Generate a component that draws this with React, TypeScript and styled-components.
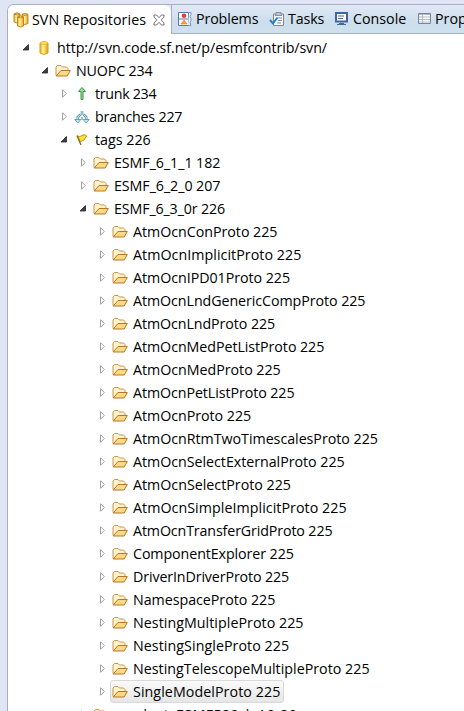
import React from 'react';
import styled, { createGlobalStyle } from 'styled-components';

const Global = createGlobalStyle`
  *{box-sizing:border-box}
  html,body{margin:0;padding:0;overflow:hidden;background:#dfe5f5}
  body{font:14.25px "Open Sans","Noto Sans",sans-serif;color:#000}
  svg{display:block;flex:none}
`;

const Page = styled.div`
  width: 464px;
  height: 711px;
  padding: 4px 0 0 7px;
  background: #dfe5f5;
  overflow: hidden;
`;
const View = styled.section`
  height: 707px;
  display: flex;
  flex-direction: column;
  background: #fff;
  border: 1px solid #a9aec0;
  border-width: 1px 0 0 1px;
  border-top-left-radius: 7px;
  overflow: hidden;
`;
const TabBar = styled.div`
  display: flex;
  height: 29px;
  flex: none;
  background: linear-gradient(#e2e9f6, #cddeed 55%, #cfe0ee);
`;
const ActiveTab = styled.div`
  display: flex;
  align-items: center;
  width: 163px;
  height: 29px;
  padding: 0 0 0 5px;
  background: #fff;
  border-top-right-radius: 7px;
`;
const InactiveTabs = styled.div`
  flex: 1;
  display: flex;
  align-items: center;
  overflow: hidden;
  border-left: 1px solid #a9aec0;
  border-bottom: 1px solid #a9aec0;
`;
const Tab = styled.div<{ $w: number }>`
  display: flex;
  align-items: center;
  flex: none;
  width: ${p => p.$w}px;
  padding-left: 5px;
`;
const Label = styled.span<{ $gap?: number; $ls?: number }>`
  margin-left: ${p => p.$gap ?? 0}px;
  letter-spacing: ${p => p.$ls ?? 0}px;
  line-height: 22px;
  white-space: pre;
`;
const CloseSlot = styled.span`
  margin-left: auto;
  margin-right: 6px;
`;
const Tree = styled.div`
  padding-top: 2px;
`;
const Row = styled.div<{ $level: number }>`
  display: flex;
  align-items: center;
  height: 23px;
  padding-left: ${p => 14 + p.$level * 19}px;
`;
const ArrowSlot = styled.span`
  width: 12px;
  flex: none;
`;
const Item = styled.div<{ $selected?: boolean }>`
  display: flex;
  align-items: center;
  height: 23px;
  padding: 0 3px 0 1px;
  border: 1px solid ${p => (p.$selected ? '#d9d9d9' : 'transparent')};
  border-radius: 3px;
  background: ${p => (p.$selected ? 'linear-gradient(#fafafa,#e6e6e6)' : 'none')};
`;

const Arrow = ({ open }: { open: boolean }) => (
  <svg width="9" height="9" viewBox="0 0 9 9">
    {open ? <path d="M6.500 1.500v5.500H1z" fill="#404040" stroke="#262626" strokeWidth=".8" /> : <path d="M2.500 .7v7.600L6.300 4.500z" fill="#fff" stroke="#a0a0a0" />}
  </svg>
);

const Folder = () => (
  <svg width="16" height="16" viewBox="0 0 16 16">
    <path d="M1 12.500V4L2.500 2.500H6L7.500 4h4L13 5.500V8" fill="#fff2cc" stroke="#c9964a" />
    <path d="M1.200 13 6 7.500h9.300L12.200 13z" fill="#fbd984" stroke="#b5772a" strokeLinejoin="round" />
  </svg>
);

const Cylinder = () => (
  <svg width="16" height="16" viewBox="0 0 16 16">
    <defs>
      <linearGradient id="gold">
        <stop offset="0" stopColor="#e9a40c" />
        <stop offset=".38" stopColor="#fff8a0" />
        <stop offset="1" stopColor="#e09a08" />
      </linearGradient>
    </defs>
    <path d="M4 3Q8 0 12 3V13Q8 16 4 13z" fill="url(#gold)" stroke="#dfa01c" />
    <ellipse cx="8" cy="3" rx="3.6" ry="1.4" fill="#ffe36a" stroke="#e2a824" strokeWidth=".7" />
  </svg>
);

const Repositories = () => (
  <svg width="17" height="16" viewBox="0 0 17 16">
    <defs>
      <linearGradient id="drum">
        <stop offset="0" stopColor="#f0b429" />
        <stop offset=".4" stopColor="#fff2a0" />
        <stop offset="1" stopColor="#e8a41a" />
      </linearGradient>
    </defs>
    {[[1, 2, 9], [9, 2.5, 10], [4.5, 5, 10]].map(([x, y, h]) => (
      <g key={x} stroke="#c07f16" strokeWidth=".9" transform={`translate(${x} ${y})`}>
        <path d={`M0 0Q3-2 6 0V${h - 1}Q3 ${h + 1} 0 ${h - 1}z`} fill="url(#drum)" />
        <path d="M0 0Q3-2 6 0Q3 2 0 0" fill="#ffe58a" />
      </g>
    ))}
  </svg>
);

const Trunk = () => (
  <svg width="16" height="16" viewBox="0 0 16 16">
    <path d="M8 1.500 11.500 5.500H9V13.500H7V5.500H4.500z" fill="#a4dc90" stroke="#379a48" strokeLinejoin="round" />
  </svg>
);

const Branches = () => (
  <svg width="16" height="16" viewBox="0 0 16 16">
    <path d="M8 2v4M6.500 5.500 3.800 8v3M9.500 5.500 12.200 8v3" fill="none" stroke="#5c9cab" strokeWidth="2.600" />
    <path d="M8 2v4M6.500 5.500 3.800 8v3M9.500 5.500 12.200 8v3" fill="none" stroke="#d4eef2" strokeWidth=".9" />
    <path d="M.8 10.500h6L3.800 14zM9.200 10.500h6l-3 3.500z" fill="#c6ebf2" stroke="#5c9cab" strokeWidth=".9" strokeLinejoin="round" />
    <path d="M8 8v3" stroke="#5c9cab" strokeWidth="1.200" />
  </svg>
);

const Flag = () => (
  <svg width="16" height="16" viewBox="0 0 16 16">
    <path d="M3 4Q6 5.500 8 3.500T12.500 4L10 8 6.500 9.500z" fill="#ffe13a" stroke="#c4940e" />
    <path d="M3 3.500 7 13" stroke="#8a6414" strokeWidth="1.300" />
  </svg>
);

const Close = () => (
  <svg width="12" height="12" viewBox="0 0 12 12">
    <path d="M1 1h2.500L6 3.700 8.500 1H11v2L8.200 6 11 9v2H8.500L6 8.300 3.500 11H1V9l2.800-3L1 3z" fill="#fff" stroke="#666" strokeWidth=".9" />
  </svg>
);

const Problems = () => (
  <svg width="16" height="16" viewBox="0 0 16 16">
    <path d="M1.500 1.500h10v13h-10zM1.500 8h10" fill="#fff" stroke="#5878a5" />
    <path d="M12 1.500h2v2l-1 2 1 2v2l-1 2 1 3h-3" fill="#eef3fb" stroke="#7d94b8" />
    <circle cx="7" cy="4.700" r="2.300" fill="#e33b40" />
    <path d="m7 9 3 4H4z" fill="#f4a62a" stroke="#d87b20" strokeWidth=".6" />
  </svg>
);

const Tasks = () => (
  <svg width="16" height="16" viewBox="0 0 16 16">
    <path d="M4.500 3h10v11.500h-10z" fill="#f5f8fd" stroke="#a08065" />
    <path d="M7 3V1.500h5V3l1 1.500H6z" fill="#b9c3d6" stroke="#6f7f9b" strokeWidth=".8" />
    <path d="M9 7h4M9 9.500h4M8 12h4" stroke="#7891ba" />
    <path d="m1 9 3 3.500 4.500-6" fill="none" stroke="#1687d4" strokeWidth="2" />
  </svg>
);

const Console = () => (
  <svg width="16" height="16" viewBox="0 0 16 16">
    <path d="M2 2h11v8.500H2z" fill="#fff" stroke="#3d66a3" strokeWidth="2" />
    <path d="M4 5h6M4 7.500h5" stroke="#52658b" />
    <path d="M5 12.500h5M3 13.500h9" stroke="#46689b" />
  </svg>
);

const Properties = () => (
  <svg width="16" height="16" viewBox="0 0 16 16">
    <path d="M1.500 2.500h12v10h-12z" fill="#fff" stroke="#76849c" />
    <path d="M2 3.500h11" stroke="#a8b4c8" />
    <path d="M2 6h11M2 8.500h11M2 11h11M5.500 3v9" stroke="#b0b9c7" />
  </svg>
);

const icons = { folder: Folder, repo: Cylinder, trunk: Trunk, branches: Branches, flag: Flag };

interface Node {
  text: string;
  level: number;
  icon?: keyof typeof icons;
  open?: boolean;
  ls?: number;
  selected?: boolean;
}

const nodes: Node[] = [
  { text: 'http://svn.code.sf.net/p/esmfcontrib/svn/', level: 0, icon: 'repo', open: true, ls: -0.09 },
  { text: 'NUOPC 234', level: 1, open: true, ls: -0.15 },
  { text: 'trunk 234', level: 2, icon: 'trunk', ls: -0.3 },
  { text: 'branches 227', level: 2, icon: 'branches', ls: -0.2 },
  { text: 'tags 226', level: 2, icon: 'flag', open: true },
  { text: 'ESMF_6_1_1 182', level: 3, ls: -0.06 },
  { text: 'ESMF_6_2_0 207', level: 3, ls: -0.06 },
  { text: 'ESMF_6_3_0r 226', level: 3, open: true, ls: -0.13 },
  { text: 'AtmOcnConProto 225', level: 4, ls: -0.03 },
  { text: 'AtmOcnImplicitProto 225', level: 4, ls: 0.05 },
  { text: 'AtmOcnIPD01Proto 225', level: 4, ls: -0.04 },
  { text: 'AtmOcnLndGenericCompProto 225', level: 4, ls: -0.07 },
  { text: 'AtmOcnLndProto 225', level: 4, ls: -0.08 },
  { text: 'AtmOcnMedPetListProto 225', level: 4, ls: -0.06 },
  { text: 'AtmOcnMedProto 225', level: 4, ls: -0.03 },
  { text: 'AtmOcnPetListProto 225', level: 4, ls: -0.08 },
  { text: 'AtmOcnProto 225', level: 4, ls: -0.04 },
  { text: 'AtmOcnRtmTwoTimescalesProto 225', level: 4, ls: -0.03 },
  { text: 'AtmOcnSelectExternalProto 225', level: 4, ls: -0.03 },
  { text: 'AtmOcnSelectProto 225', level: 4 },
  { text: 'AtmOcnSimpleImplicitProto 225', level: 4, ls: 0.05 },
  { text: 'AtmOcnTransferGridProto 225', level: 4, ls: -0.13 },
  { text: 'ComponentExplorer 225', level: 4, ls: -0.09 },
  { text: 'DriverInDriverProto 225', level: 4, ls: -0.12 },
  { text: 'NamespaceProto 225', level: 4, ls: -0.03 },
  { text: 'NestingMultipleProto 225', level: 4, ls: 0.04 },
  { text: 'NestingSingleProto 225', level: 4, ls: 0.06 },
  { text: 'NestingTelescopeMultipleProto 225', level: 4, ls: 0.02 },
  { text: 'SingleModelProto 225', level: 4, selected: true, ls: 0.07 },
  { text: 'product_ESMF520_le10-20', level: 3, ls: 0.4 },
];

export default function App() {
  return (
    <Page>
      <Global />
      <View>
        <TabBar>
          <ActiveTab>
            <Repositories />
            <Label $gap={2} $ls={0.06}>SVN Repositories</Label>
            <CloseSlot><Close /></CloseSlot>
          </ActiveTab>
          <InactiveTabs>
            <Tab $w={92}><Problems /><Label $gap={3} $ls={-0.12}>Problems</Label></Tab>
            <Tab $w={65}><Tasks /><Label $gap={3} $ls={-0.12}>Tasks</Label></Tab>
            <Tab $w={83}><Console /><Label $gap={3}>Console</Label></Tab>
            <Tab $w={100}><Properties /><Label $gap={2}>Properties</Label></Tab>
          </InactiveTabs>
        </TabBar>
        <Tree>
          {nodes.map(n => {
            const Icon = icons[n.icon ?? 'folder'];
            return (
              <Row key={n.text} $level={n.level}>
                <ArrowSlot><Arrow open={!!n.open} /></ArrowSlot>
                <Item $selected={n.selected}>
                  <Icon />
                  <Label $gap={5} $ls={n.ls}>{n.text}</Label>
                </Item>
              </Row>
            );
          })}
        </Tree>
      </View>
    </Page>
  );
}
